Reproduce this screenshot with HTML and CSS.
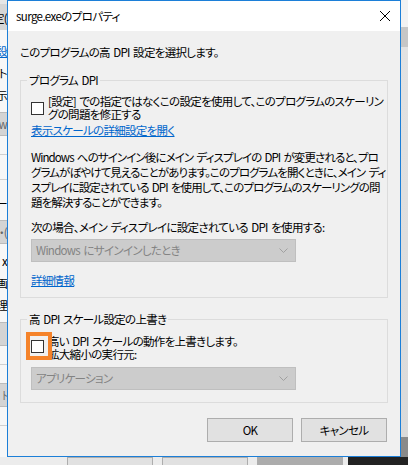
FILE: index.html
```html
<!DOCTYPE html>
<html lang="ja">
<head>
<meta charset="utf-8">
<link rel="stylesheet" href="styles.css">
</head>
<body>
<div class="desktop">
  <div class="bg-left">
    <div class="bl-top"></div>
    <div class="bl-tab">定(</div>
    <div class="bl-text bl-link">設</div>
    <div class="bl-text">ート</div>
    <div class="bl-text">表示</div>
    <div class="bl-btn">ow</div>
    <div class="bl-rule"></div>
    <div class="bl-rule"></div>
    <div class="bl-text">ー</div>
    <div class="bl-btn">・(</div>
    <div class="bl-text">x</div>
    <div class="bl-text">画</div>
    <div class="bl-text">理</div>
    <div class="bl-btn"></div>
    <div class="bl-rule"></div>
    <div class="bl-btn">ﾄ</div>
    <div class="bl-rule"></div>
  </div>
  <div class="bg-right">
    <div class="br-top"></div>
    <div class="br-bar"></div>
    <div class="br-fill"></div>
    <div class="br-dark"></div>
  </div>
  <div class="bg-bottom">
    <span class="bb-btn"></span>
    <span class="bb-btn"></span>
    <span class="bb-btn bb-dim"></span>
    <span class="bb-dark"></span>
  </div>

  <div class="dialog">
    <div class="titlebar">
      <span class="title">surge.exeのプロパティ</span>
      <svg class="close" width="12" height="12" viewBox="0 0 12 12"><path d="M1 1 L11 11 M11 1 L1 11" stroke="#000" stroke-width="1" fill="none"/></svg>
    </div>
    <div class="content">
      <p class="heading">このプログラムの高 DPI 設定を選択します。</p>

      <fieldset class="group group-dpi">
        <legend>プログラム DPI</legend>
        <div class="check">
          <span class="box"></span>
          <span class="check-text">[設定] での指定ではなくこの設定を使用して、このプログラムのスケーリン<br>グの問題を修正する</span>
        </div>
        <a class="link link-open">表示スケールの詳細設定を開く</a>
        <p class="para">Windows へのサインイン後にメイン ディスプレイの DPI が変更されると、プロ<br>グラムがぼやけて見えることがあります。このプログラムを開くときに、メイン ディ<br>スプレイに設定されている DPI を使用して、このプログラムのスケーリングの問<br>題を解決することができます。</p>
        <p class="prompt">次の場合、メイン ディスプレイに設定されている DPI を使用する:</p>
        <div class="select select-dpi">
          <span>Windows にサインインしたとき</span>
          <svg class="chev" width="9" height="5" viewBox="0 0 9 5"><path d="M0.5 0.5 L4.5 4.5 L8.5 0.5" stroke="#a0a0a0" fill="none"/></svg>
        </div>
        <a class="link link-more">詳細情報</a>
      </fieldset>

      <fieldset class="group group-override">
        <legend>高 DPI スケール設定の上書き</legend>
        <div class="check check-override">
          <span class="box"><span class="highlight"></span></span>
          <span class="check-text">高い DPI スケールの動作を上書きします。<br>拡大縮小の実行元:</span>
        </div>
        <div class="select select-app">
          <span>アプリケーション</span>
          <svg class="chev" width="9" height="5" viewBox="0 0 9 5"><path d="M0.5 0.5 L4.5 4.5 L8.5 0.5" stroke="#a0a0a0" fill="none"/></svg>
        </div>
      </fieldset>

      <div class="buttons">
        <button class="btn">OK</button>
        <button class="btn">キャンセル</button>
      </div>
    </div>
  </div>
</div>
</body>
</html>
```

FILE: styles.css
```css
html, body {
  margin: 0;
  padding: 0;
}
body {
  width: 408px;
  height: 465px;
  overflow: hidden;
  background: #f0f0f0;
  font-family: "Noto Sans CJK JP", sans-serif;
  font-size: 11.5px;
  letter-spacing: -0.7px;
  word-spacing: 1.5px;
  color: #000;
  font-feature-settings: "palt";
}
.desktop {
  position: relative;
  width: 408px;
  height: 465px;
  overflow: hidden;
}

/* background windows */
.bg-left {
  position: absolute;
  left: -30px;
  top: 0;
  width: 37px;
  height: 465px;
  background: #f7f7f7;
  display: flex;
  flex-direction: column;
  align-items: flex-end;
  line-height: 14px;
}
.bl-top { height: 4px; width: 100%; background: #e6e6e6; }
.bl-tab { height: 26px; width: 100%; background: #d6d6d6; text-align: right; line-height: 28px; margin-bottom: 10px; }
.bl-text { height: 14px; margin: 4px 0 4px; text-align: right; }
.bl-link { color: #0066cc; text-decoration: underline; }
.bl-btn { height: 22px; width: 100%; background: #d4d4d4; border-top: 1px solid #bbb; border-bottom: 1px solid #bbb; margin: 6px 0; text-align: right; color: #666; line-height: 22px; }
.bl-rule { height: 1px; width: 100%; background: #d0d0d0; margin: 12px 0; }

.bg-right {
  position: absolute;
  left: 401px;
  top: 0;
  width: 7px;
  height: 465px;
  display: flex;
  flex-direction: column;
}
.br-top { height: 27px; background: #f2f2f2; }
.br-bar { height: 20px; background: #c6c6c6; }
.br-fill { flex: 1; background: linear-gradient(#e2e2e2, #dadada); }
.br-dark { height: 28px; background: #8a8a8a; }

.bg-bottom {
  position: absolute;
  left: 0;
  top: 457px;
  width: 408px;
  height: 8px;
  background: #ececec;
  display: flex;
  gap: 9px;
  padding-left: 67px;
  box-sizing: border-box;
}
.bb-btn { width: 86px; height: 8px; box-sizing: border-box; background: #e1e1e1; border: 1px solid #adadad; border-bottom: 0; }
.bb-dim { background: #acacac; }
.bb-dark { flex: 1; background: #222; margin-left: -4px; }

/* dialog */
.dialog {
  position: absolute;
  left: 7px;
  top: 0;
  width: 394px;
  height: 457px;
  box-sizing: border-box;
  border: 1px solid #1c7fd8;
  background: #f0f0f0;
  display: flex;
  flex-direction: column;
}
.titlebar {
  height: 30px;
  flex: none;
  background: #fff;
  display: flex;
  align-items: center;
  justify-content: space-between;
  padding: 0 9px 0 8px;
}
.title {
  line-height: 16px;
  letter-spacing: -0.6px;
}
.close { display: block; margin-top: -1px; }

.content {
  flex: 1;
  padding: 0 12px;
  display: flex;
  flex-direction: column;
}
.heading {
  margin: 14px 0 0;
  line-height: 15px;
  white-space: nowrap;
}

.group {
  margin: 13px 0 0;
  padding: 0 10px;
  border: 1px solid #dcdcdc;
  display: flex;
  flex-direction: column;
  align-items: flex-start;
  min-width: 0;
}
.group legend {
  padding: 0 2px;
  margin-left: -4px;
  line-height: 14px;
}
.group-dpi { padding-bottom: 9px; }
.group-override { margin-top: 14px; padding-bottom: 12px; }

.check {
  display: flex;
  align-items: center;
  gap: 4px;
  margin-top: 8px;
}
.check-override {
  align-items: flex-start;
  margin-top: 9px;
}
.box {
  position: relative;
  flex: none;
  width: 13px;
  height: 13px;
  box-sizing: border-box;
  border: 1px solid #333;
  background: #fff;
}
.check-override .box { margin-top: 5px; }
.highlight {
  position: absolute;
  left: -6px;
  top: -9px;
  width: 26px;
  height: 28px;
  box-sizing: border-box;
  border: 4px solid #f5832a;
  z-index: 2;
}
.check-text {
  line-height: 13px;
  white-space: nowrap;
}

.link {
  color: #0066cc;
  text-decoration: underline;
  line-height: 15px;
  white-space: nowrap;
}
.link-open { margin-top: 2px; }
.link-more { margin-top: 11px; }

.para {
  margin: 12px 0 0;
  line-height: 15px;
  white-space: nowrap;
  letter-spacing: -0.9px;
}
.prompt {
  margin: 10px 0 0;
  line-height: 15px;
  white-space: nowrap;
}

.select {
  width: 265px;
  height: 23px;
  box-sizing: border-box;
  background: #cccccc;
  border: 1px solid #bfbfbf;
  color: #838383;
  display: flex;
  align-items: center;
  justify-content: space-between;
  padding: 0 4px 0 4px;
  line-height: 15px;
}
.select-dpi { margin-top: 4px; }
.select-app { margin-top: 6px; }
.chev { display: block; margin-right: 3px; }

.buttons {
  display: flex;
  justify-content: flex-end;
  gap: 8px;
  margin-top: 15px;
  padding-right: 1px;
}
.btn {
  width: 86px;
  height: 24px;
  box-sizing: border-box;
  background: #e1e1e1;
  border: 1px solid #adadad;
  font: inherit;
  letter-spacing: inherit;
  word-spacing: inherit;
  color: #000;
  padding: 0;
  line-height: 15px;
}
```
